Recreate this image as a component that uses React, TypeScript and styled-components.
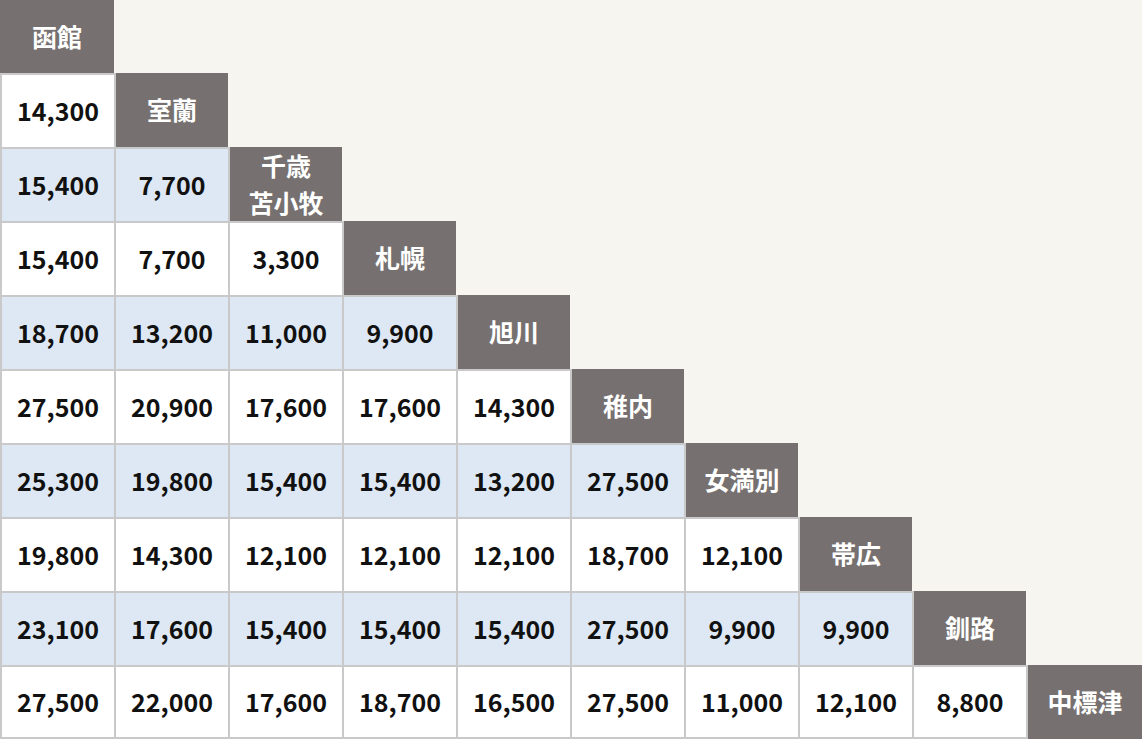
import React from "react";
import styled, { createGlobalStyle } from "styled-components";

const GlobalStyle = createGlobalStyle`
  html, body {
    margin: 0;
    padding: 0;
    background: #f6f5ef;
    overflow: hidden;
  }
  body {
    font-family: "Noto Sans CJK JP", "Noto Sans", sans-serif;
  }
`;

const Grid = styled.div`
  display: grid;
  grid-template-columns: repeat(9, 114px) 116px;
  grid-template-rows: 73px repeat(9, 74px);
  width: 1142px;
  height: 739px;
`;

const Base = styled.div`
  box-sizing: border-box;
  display: flex;
  align-items: center;
  justify-content: center;
  text-align: center;
  font-family: "Noto Sans CJK JP", "Noto Sans", sans-serif;
  font-weight: 700;
  font-size: 25px;
  line-height: 1.5;
`;

const DataCell = styled(Base)<{ $alt: boolean; $last: boolean }>`
  background: ${(p) => (p.$alt ? "#dde8f4" : "#ffffff")};
  color: #111;
  border-top: 2px solid #c9c9c9;
  border-left: 2px solid #c9c9c9;
  border-bottom: ${(p) => (p.$last ? "2px solid #c9c9c9" : "none")};
`;

const HeadCell = styled(Base)<{ $first: boolean }>`
  background: #767170;
  color: #ffffff;
  border-left: ${(p) => (p.$first ? "none" : "2px solid #c9c9c9")};
`;

const Blank = styled.div``;

const stations = [
  "函館",
  "室蘭",
  "千歳\n苫小牧",
  "札幌",
  "旭川",
  "稚内",
  "女満別",
  "帯広",
  "釧路",
  "中標津",
];

const fares: string[][] = [
  [],
  ["14,300"],
  ["15,400", "7,700"],
  ["15,400", "7,700", "3,300"],
  ["18,700", "13,200", "11,000", "9,900"],
  ["27,500", "20,900", "17,600", "17,600", "14,300"],
  ["25,300", "19,800", "15,400", "15,400", "13,200", "27,500"],
  ["19,800", "14,300", "12,100", "12,100", "12,100", "18,700", "12,100"],
  ["23,100", "17,600", "15,400", "15,400", "15,400", "27,500", "9,900", "9,900"],
  ["27,500", "22,000", "17,600", "18,700", "16,500", "27,500", "11,000", "12,100", "8,800"],
];

export default function App() {
  const cells: React.ReactNode[] = [];
  fares.forEach((row, r) => {
    row.forEach((v, c) => {
      cells.push(
        <DataCell key={`d${r}-${c}`} $alt={r % 2 === 0} $last={r === 9}>
          {v}
        </DataCell>
      );
    });
    const name = stations[r].split("\n");
    cells.push(
      <HeadCell key={`h${r}`} $first={r === 0}>
        <span>
          {name.map((n, i) => (
            <React.Fragment key={i}>
              {i > 0 && <br />}
              {n}
            </React.Fragment>
          ))}
        </span>
      </HeadCell>
    );
    for (let c = r + 1; c < 10; c++) {
      cells.push(<Blank key={`b${r}-${c}`} />);
    }
  });
  return (
    <>
      <GlobalStyle />
      <Grid>{cells}</Grid>
    </>
  );
}
